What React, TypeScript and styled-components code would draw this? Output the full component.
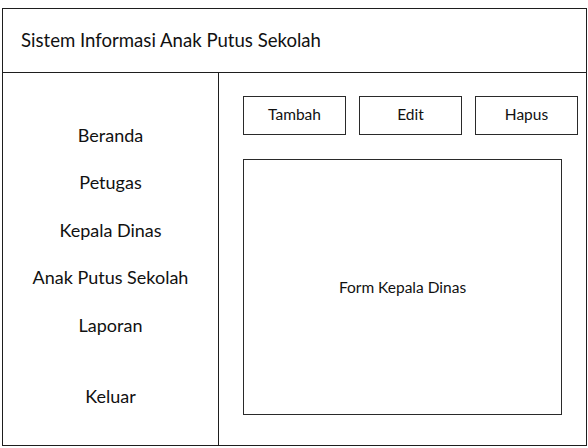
import React from "react";
import styled, { createGlobalStyle } from "styled-components";

const Global = createGlobalStyle`
  html, body { margin: 0; padding: 0; background: #ffffff; }
  body { font-family: "Lato", "Liberation Sans", sans-serif; color: #111; }
`;

const Frame = styled.div`
  box-sizing: border-box;
  margin: 8px 0 0 2px;
  width: 585px;
  height: 438px;
  border: 1px solid #1e1e1e;
  display: grid;
  grid-template-rows: 64px 1fr;
`;

const Header = styled.header`
  border-bottom: 1px solid #1e1e1e;
  display: flex;
  align-items: center;
  padding: 0 0 2px 18px;
  font-size: 18.6px;
`;

const Body = styled.div`
  display: grid;
  grid-template-columns: 216px 1fr;
  min-height: 0;
`;

const Sidebar = styled.nav`
  border-right: 1px solid #1e1e1e;
  display: flex;
  flex-direction: column;
  align-items: center;
  padding-top: 38px;
`;

const MenuItem = styled.div<{ $gapAbove?: number }>`
  height: 47.5px;
  display: flex;
  align-items: center;
  font-size: 18px;
  margin-top: ${(p) => p.$gapAbove ?? 0}px;
`;

const Main = styled.main`
  padding: 23px 0 0 24px;
  display: flex;
  flex-direction: column;
  gap: 24px;
`;

const Toolbar = styled.div`
  display: flex;
  width: 335px;
  justify-content: space-between;
`;

const Button = styled.div`
  box-sizing: border-box;
  width: 103px;
  height: 39px;
  border: 1px solid #2a2a2a;
  display: flex;
  align-items: center;
  justify-content: center;
  font-size: 15.5px;
  padding-bottom: 3px;
`;

const FormBox = styled.div`
  box-sizing: border-box;
  width: 319px;
  height: 256px;
  border: 1px solid #2a2a2a;
  display: flex;
  align-items: center;
  justify-content: center;
  font-size: 15.5px;
`;

const menu = ["Beranda", "Petugas", "Kepala Dinas", "Anak Putus Sekolah", "Laporan"];

export default function App() {
  return (
    <>
      <Global />
      <Frame>
        <Header>Sistem Informasi Anak Putus Sekolah</Header>
        <Body>
          <Sidebar>
            {menu.map((m) => (
              <MenuItem key={m}>{m}</MenuItem>
            ))}
            <MenuItem $gapAbove={24}>Keluar</MenuItem>
          </Sidebar>
          <Main>
            <Toolbar>
              <Button>Tambah</Button>
              <Button>Edit</Button>
              <Button>Hapus</Button>
            </Toolbar>
            <FormBox>Form Kepala Dinas</FormBox>
          </Main>
        </Body>
      </Frame>
    </>
  );
}
